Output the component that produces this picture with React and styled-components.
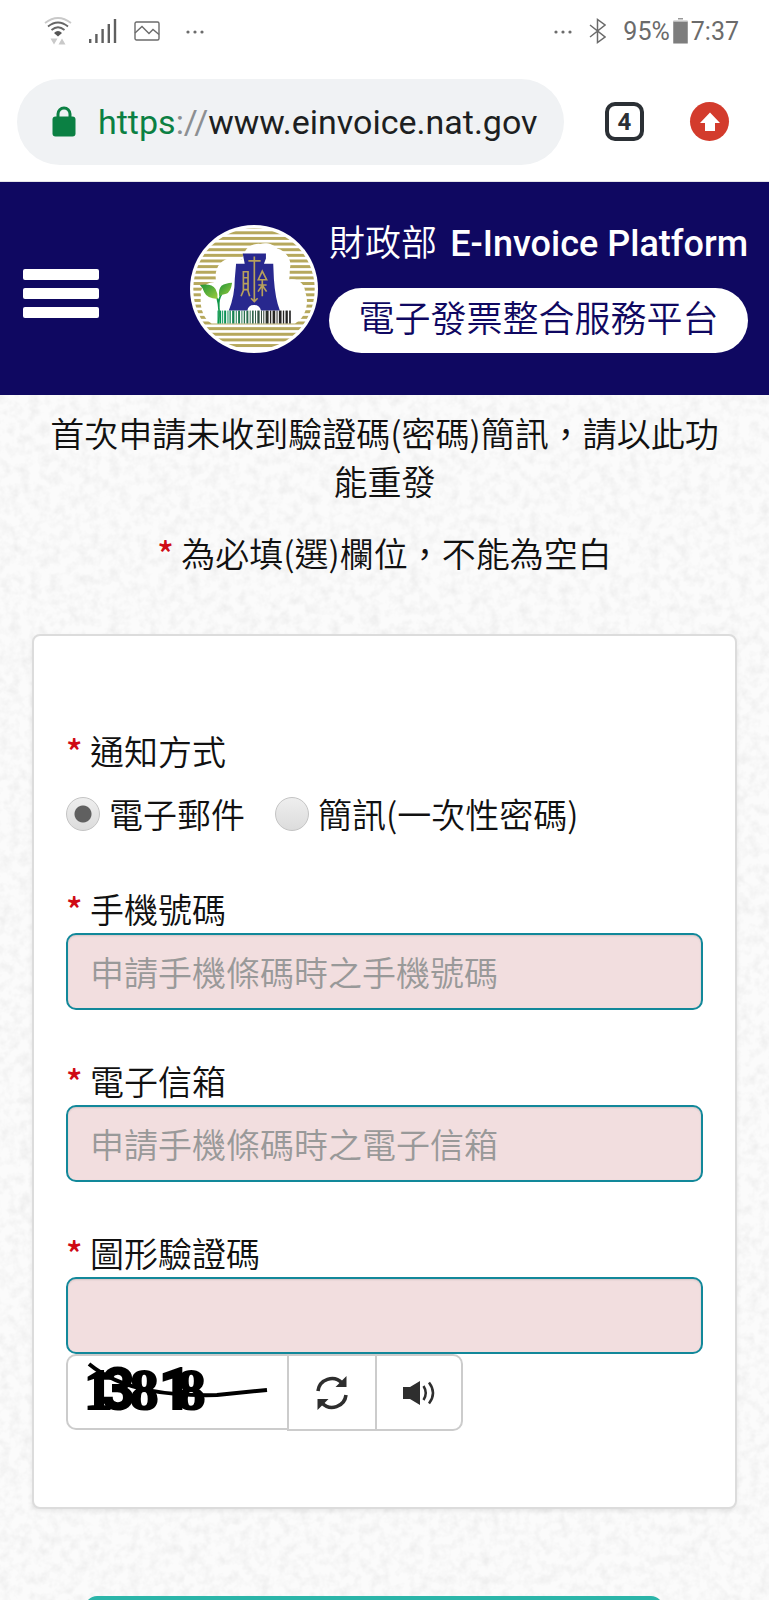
// @flow
import React, { useState } from "react";
import styled, { createGlobalStyle } from "styled-components";

const GlobalStyle = createGlobalStyle`
  * {
    box-sizing: border-box;
  }

  body {
    margin: 0;
    background: #fff;
    font-family: Roboto, "Noto Sans CJK TC", sans-serif;
    color: #111;
  }

  button,
  input {
    font: inherit;
    color: inherit;
  }
`;

const Screen = styled.div`
  display: flex;
  flex-direction: column;
  height: 100vh;
  overflow: hidden;
`;

// phone status bar
const StatusBar = styled.div`
  display: flex;
  flex: none;
  align-items: center;
  justify-content: space-between;
  height: 62px;
  padding: 0 30px 0 44px;
  font-size: 25px;
  color: #6b6b6b;

  svg {
    display: block;
  }
`;

const StatusGroup = styled.div`
  display: flex;
  align-items: center;
  gap: ${(props) => props.$gap}px;
`;

// browser bar
const BrowserBar = styled.div`
  display: flex;
  flex: none;
  align-items: center;
  height: 120px;
  padding: 0 40px 0 17px;
  border-bottom: 1px solid #e4e4e8;
`;

const AddressBox = styled.div`
  display: flex;
  flex: 1;
  align-items: center;
  gap: 22px;
  min-width: 0;
  height: 86px;
  padding: 0 16px 0 35px;
  border-radius: 43px;
  background: #f0f2f4;

  svg {
    flex: none;
  }
`;

const Url = styled.span`
  overflow: hidden;
  white-space: nowrap;
  font-size: 34px;
  line-height: 50px;
  color: #1d1f21;

  em {
    font-style: normal;
    color: #0b8043;
  }

  i {
    font-style: normal;
    color: #8c8f92;
  }
`;

const TabsButton = styled.button`
  width: 39px;
  height: 39px;
  margin: 0 46px 0 41px;
  padding: 0;
  border: 4px solid #2b3035;
  border-radius: 10px;
  background: none;
  font-size: 24px;
  font-weight: 700;
  line-height: 30px;
  color: #2b3035;
`;

const UpdateButton = styled.button`
  display: flex;
  align-items: center;
  justify-content: center;
  width: 39px;
  height: 39px;
  padding: 0;
  border: 0;
  border-radius: 50%;
  background: #d33b2c;
`;

// site header
const Header = styled.header`
  display: flex;
  flex: none;
  align-items: center;
  justify-content: space-between;
  height: 213px;
  padding: 0 21px 0 23px;
  background: #0f0861;
`;

const MenuButton = styled.button`
  display: flex;
  flex-direction: column;
  gap: 8px;
  width: 76px;
  margin-top: 10px;
  padding: 0;
  border: 0;
  background: none;

  span {
    width: 100%;
    height: 11px;
    border-radius: 2px;
    background: #fff;
  }
`;

const Brand = styled.a`
  display: flex;
  align-items: center;
  gap: 11px;
  color: #fff;
  text-decoration: none;
`;

const BrandText = styled.span`
  display: flex;
  flex-direction: column;
  gap: 20px;
  min-width: 419px;
  padding-bottom: 4px;
`;

const BrandName = styled.span`
  display: flex;
  justify-content: space-between;
  font-size: 36px;
  font-weight: 350;
  line-height: 48px;
  white-space: nowrap;

  b {
    font-weight: 500;
  }
`;

const BrandPill = styled.span`
  display: block;
  height: 65px;
  border-radius: 33px;
  background: #fff;
  font-size: 36px;
  font-weight: 350;
  line-height: 65px;
  text-align: center;
  color: #0f0861;
`;

// page body on the paper texture
const Main = styled.main`
  position: relative;
  flex: 1;
  min-height: 0;
  padding: 14px 32px 0;
  overflow: hidden;
  background: #fbfbfb;
  font-family: "Noto Sans CJK TC", sans-serif;
  font-size: 34px;
  font-weight: 350;
  line-height: 48px;
`;

const Texture = styled.svg`
  position: absolute;
  inset: 0;
  width: 100%;
  height: 100%;
`;

const Body = styled.form`
  position: relative;
`;

const Intro = styled.p`
  margin: 0 0 24px;
  padding: 0 15px;
  text-align: center;
`;

const Required = styled.span`
  font-weight: 500;
  color: #cf0a14;
`;

const Card = styled.section`
  margin-top: 57px;
  padding: 91px 32px 76px;
  border: 2px solid #dcdcdc;
  border-radius: 8px;
  background: #fff;
  box-shadow: 0 2px 4px rgba(0, 0, 0, 0.08);
`;

const Methods = styled.fieldset`
  margin: 0;
  padding: 0;
  border: 0;

  legend {
    padding: 0;
  }
`;

const Options = styled.div`
  display: flex;
  flex-wrap: wrap;
  gap: 30px;
  margin-top: 15px;
`;

const Option = styled.label`
  display: flex;
  align-items: center;
  gap: 9px;
`;

const Radio = styled.input`
  width: 34px;
  height: 34px;
  margin: 0;
  border: 1px solid #c4c4c4;
  border-radius: 50%;
  appearance: none;
  background: linear-gradient(#eee, #dcdcdc);

  &:checked {
    background: radial-gradient(circle, #606060 8px, transparent 9px),
      linear-gradient(#eee, #dcdcdc);
  }
`;

const Field = styled.div`
  margin-top: 47px;

  label {
    display: block;
  }
`;

const TextInput = styled.input`
  display: block;
  width: 100%;
  height: 77px;
  padding: 0 22px;
  border: 2px solid #12889a;
  border-radius: 10px;
  outline: none;
  background: #f2dedf;
  box-shadow: inset 0 1px 2px rgba(0, 0, 0, 0.12);

  &::placeholder {
    color: #999;
    opacity: 1;
  }
`;

const CaptchaRow = styled.div`
  display: flex;
`;

const CaptchaPicture = styled.div`
  width: 221px;
  height: 76px;
  border: 2px solid #ccc;
  border-right: 0;
  border-radius: 10px 0 0 10px;
  background: #fff;

  svg {
    display: block;
  }
`;

const CaptchaButton = styled.button`
  display: flex;
  align-items: center;
  justify-content: center;
  width: 88px;
  height: 77px;
  padding: 0;
  border: 2px solid #ccc;
  border-right-width: ${(props) => (props.$last ? 2 : 0)}px;
  border-radius: ${(props) => (props.$last ? "0 10px 10px 0" : "0")};
  background: #fff;
`;

const SubmitButton = styled.button`
  display: block;
  width: calc(100% - 127px);
  height: 77px;
  margin: 87px 0 0 53px;
  border: 0;
  border-radius: 12px;
  background: #2bb5a9;
`;

const Dots = () => (
  <svg width="18" height="6" viewBox="0 0 18 6" fill="#6b6b6b">
    <circle cx="2" cy="4" r="1.6" />
    <circle cx="9" cy="4" r="1.6" />
    <circle cx="16" cy="4" r="1.6" />
  </svg>
);

const WifiIcon = () => (
  <svg width="28" height="28" viewBox="0 0 28 28" fill="none">
    <path d="M1 6 Q14 -4 27 6" stroke="#c9c9c9" strokeWidth="1.8" />
    <path d="M4 9.5 Q14 1.5 24 9.5" stroke="#666" strokeWidth="1.8" />
    <path d="M7.5 13 Q14 7.5 20.5 13" stroke="#666" strokeWidth="1.8" />
    <path d="M10 16 Q14 12 18 16 L14 19.5Z" fill="#555" />
    <path d="M6.5 21.5h7l-3.5 6zM14.5 27.5l3.5-6 3.5 6z" fill="#c9c9c9" />
  </svg>
);

const SignalIcon = () => (
  <svg width="28" height="24" viewBox="0 0 28 24" fill="#5f5f5f">
    <rect x="0" y="20" width="2.4" height="4" />
    <rect x="6.2" y="15" width="2.4" height="9" />
    <rect x="12.4" y="10" width="2.4" height="14" />
    <rect x="18.6" y="5" width="2.4" height="19" />
    <rect x="24.8" y="0" width="2.4" height="24" />
  </svg>
);

const PictureIcon = () => (
  <svg width="26" height="20" viewBox="0 0 26 20" fill="none" stroke="#6b6b6b">
    <rect x="1" y="1" width="24" height="18" rx="1.5" strokeWidth="1.4" />
    <path d="M1 12l7-6.5 7 7 4-4 6 5" strokeWidth="1.4" />
  </svg>
);

const BluetoothIcon = () => (
  <svg width="17" height="26" viewBox="0 0 17 26" fill="none" stroke="#6b6b6b" strokeWidth="1.5">
    <path d="M1 7l15 12-7.5 5.5v-23L16 7 1 19" />
  </svg>
);

const BatteryIcon = () => (
  <svg width="15" height="26" viewBox="0 0 15 26">
    <rect x="5" y="0" width="5" height="1.5" fill="#999" />
    <rect x="0" y="2.5" width="15" height="23.5" rx="1" fill="#bbb" />
    <rect x="0.5" y="4" width="14" height="21" fill="#7d7d7d" />
  </svg>
);

const LockIcon = () => (
  <svg width="24" height="31" viewBox="0 0 24 31">
    <path d="M6 12V8a6 6 0 0 1 12 0v4" fill="none" stroke="#0b8043" strokeWidth="3" />
    <rect x="0.5" y="10.5" width="23" height="20" rx="3" fill="#0b8043" />
  </svg>
);

const ArrowIcon = () => (
  <svg width="22" height="20" viewBox="0 0 22 20" fill="#fff">
    <path d="M11 0.5L21 11h-5v8H6v-8H1z" />
  </svg>
);

const stripes = Array.from({ length: 23 }, (_, i) => 29 + i * 17);
// x, width of each bar
const bars = [
  [112, 3], [118, 5], [126, 3], [132, 6], [142, 3], [148, 4], [156, 7],
  [167, 3], [174, 6], [184, 3], [191, 4], [199, 6], [209, 3], [216, 5],
  [225, 3], [232, 7], [243, 3], [250, 3], [257, 9], [270, 4], [278, 8],
  [290, 3], [297, 8], [309, 4], [317, 7], [328, 5],
];

const Logo = () => (
  <svg width="128" height="128" viewBox="29 27 386 386">
    <defs>
      <clipPath id="seal">
        <circle cx="222" cy="220" r="183" />
      </clipPath>
      <linearGradient id="leaf" x1="0" y1="0" x2="1" y2="1">
        <stop offset="0" stopColor="#1f9438" />
        <stop offset="1" stopColor="#9ccc3c" />
      </linearGradient>
      <linearGradient id="bars" gradientUnits="userSpaceOnUse" x1="112" y1="0" x2="335" y2="0">
        <stop offset="0" stopColor="#009a57" />
        <stop offset="0.5" stopColor="#35634c" />
        <stop offset="0.7" stopColor="#2a2725" />
        <stop offset="1" stopColor="#222" />
      </linearGradient>
    </defs>
    <circle cx="222" cy="220" r="193" fill="#fff" />
    <g clipPath="url(#seal)">
      {stripes.map((y) => (
        <rect key={y} x="29" y={y} width="386" height="9" fill="#b6a85c" />
      ))}
      <path
        d="M94 324C66 308 58 270 62 238C58 214 80 200 108 198C100 160 120 128 158 126
          Q176 126 186 132C192 98 212 82 240 84C258 78 282 84 292 98C318 104 338 134 330 158
          Q330 178 328 192C354 186 376 206 376 228C390 262 378 306 346 324Z"
        fill="#fff"
      />
      <path
        d="M188 113H258V128L252 144H280L282 190Q286 250 300 285H243Q240 268 222 268T202 285H146
          Q164 240 164 190L168 144H194Z"
        fill="#28288e"
      />
      <g fill="none" stroke="#b7a05c" strokeWidth="5">
        <path d="M223 122V258M205 135H242M213 248L223 258 233 248" />
        <path d="M190 168H204V222H190ZM190 186H204M190 204H204M191 222L183 242M203 222L209 242" />
        <path d="M247 166L235 192H260ZM247 192V242M235 208H260M246 210L234 228M248 210L260 228" />
      </g>
      <g fill="url(#bars)">
        {bars.map(([x, w]) => (
          <rect key={x} x={x} y="285" width={w} height="39" />
        ))}
      </g>
      <path d="M115 324Q120 280 111 247M116 275Q114 250 124 236" fill="none" stroke="#12984a" strokeWidth="5" />
      <path d="M59 208Q94 202 106 220Q114 234 112 250Q80 248 72 230Q68 216 59 208Z" fill="url(#leaf)" />
      <path d="M156 201Q152 230 138 234Q126 236 117 242Q114 220 124 210Q136 202 156 201Z" fill="url(#leaf)" />
    </g>
  </svg>
);

const RefreshIcon = () => (
  <svg width="34" height="36" viewBox="0 0 34 36">
    <path d="M3 16A14 14 0 0 1 27 8M31 20A14 14 0 0 1 7 28" fill="none" stroke="#2e2e2e" strokeWidth="3.6" />
    <path d="M31.5 1V12H20.5ZM2.5 35V24H13.5Z" fill="#2e2e2e" />
  </svg>
);

const SpeakerIcon = () => (
  <svg width="33" height="24" viewBox="0 0 33 24">
    <path d="M0 6H7L17 0V24L7 18H0Z" fill="#2e2e2e" />
    <path d="M20.5 5Q25 12 20.5 19M26 1.5Q34 12 26 22.5" fill="none" stroke="#2e2e2e" strokeWidth="2.5" />
  </svg>
);

const serif = "Liberation Serif, serif";

// the digits of the code run into each other on purpose
const CaptchaCode = () => (
  <svg width="216" height="72" viewBox="0 0 216 72" role="img">
    <text y="53" fontSize="57" fontWeight="700" stroke="#000" strokeWidth="2">
      <tspan x="16" fontFamily={serif}>1</tspan>
      <tspan x="34" fontFamily="Roboto, sans-serif">3</tspan>
      <tspan x="62" fontFamily={serif}>8</tspan>
      <tspan x="91" fontFamily="Roboto, sans-serif">1</tspan>
      <tspan x="109" fontFamily={serif}>8</tspan>
    </text>
    <path d="M21 8C55 36 105 40 149 39L199 34" fill="none" stroke="#000" strokeWidth="4" />
  </svg>
);

const PaperTexture = () => (
  <Texture aria-hidden="true">
    <filter id="paper">
      <feTurbulence type="fractalNoise" baseFrequency="0.1" numOctaves="3" seed="4" />
      <feColorMatrix values="0 0 0 0 0  0 0 0 0 0  0 0 0 0 0  0.1 0 0 0 -0.04" />
    </filter>
    <rect width="100%" height="100%" filter="url(#paper)" />
  </Texture>
);

const Star = () => <Required>* </Required>;

const App = () => {
  const [method, setMethod] = useState("email");

  return (
    <Screen>
      <GlobalStyle />
      <StatusBar>
        <StatusGroup $gap={26}>
          <StatusGroup $gap={17}>
            <WifiIcon />
            <SignalIcon />
            <PictureIcon />
          </StatusGroup>
          <Dots />
        </StatusGroup>
        <StatusGroup $gap={17}>
          <Dots />
          <BluetoothIcon />
          <StatusGroup $gap={3}>
            <span>95%</span>
            <BatteryIcon />
            <span>7:37</span>
          </StatusGroup>
        </StatusGroup>
      </StatusBar>

      <BrowserBar>
        <AddressBox>
          <LockIcon />
          <Url>
            <em>https</em>
            <i>://</i>www.einvoice.nat.gov
          </Url>
        </AddressBox>
        <TabsButton type="button">4</TabsButton>
        <UpdateButton type="button" aria-label="更新">
          <ArrowIcon />
        </UpdateButton>
      </BrowserBar>

      <Header>
        <MenuButton type="button" aria-label="選單">
          <span />
          <span />
          <span />
        </MenuButton>
        <Brand href="#">
          <Logo />
          <BrandText>
            <BrandName>
              <span>財政部</span> <b>E-Invoice Platform</b>
            </BrandName>
            <BrandPill>電子發票整合服務平台</BrandPill>
          </BrandText>
        </Brand>
      </Header>

      <Main>
        <PaperTexture />
        <Body onSubmit={(event) => event.preventDefault()}>
          <Intro>首次申請未收到驗證碼(密碼)簡訊，請以此功能重發</Intro>
          <Intro>
            <Star />
            為必填(選)欄位，不能為空白
          </Intro>

          <Card>
            <Methods>
              <legend>
                <Star />
                通知方式
              </legend>
              <Options>
                <Option>
                  <Radio
                    type="radio"
                    name="method"
                    checked={method === "email"}
                    onChange={() => setMethod("email")}
                  />
                  電子郵件
                </Option>
                <Option>
                  <Radio
                    type="radio"
                    name="method"
                    checked={method === "sms"}
                    onChange={() => setMethod("sms")}
                  />
                  簡訊(一次性密碼)
                </Option>
              </Options>
            </Methods>

            <Field>
              <label htmlFor="phone">
                <Star />
                手機號碼
              </label>
              <TextInput id="phone" type="tel" placeholder="申請手機條碼時之手機號碼" />
            </Field>
            <Field>
              <label htmlFor="email">
                <Star />
                電子信箱
              </label>
              <TextInput id="email" type="email" placeholder="申請手機條碼時之電子信箱" />
            </Field>
            <Field>
              <label htmlFor="captcha">
                <Star />
                圖形驗證碼
              </label>
              <TextInput id="captcha" type="text" />
              <CaptchaRow>
                <CaptchaPicture>
                  <CaptchaCode />
                </CaptchaPicture>
                <CaptchaButton type="button" aria-label="重新產生">
                  <RefreshIcon />
                </CaptchaButton>
                <CaptchaButton type="button" aria-label="語音播放" $last>
                  <SpeakerIcon />
                </CaptchaButton>
              </CaptchaRow>
            </Field>
          </Card>

          <SubmitButton type="submit" aria-label="送出" />
        </Body>
      </Main>
    </Screen>
  );
};

export default App;
